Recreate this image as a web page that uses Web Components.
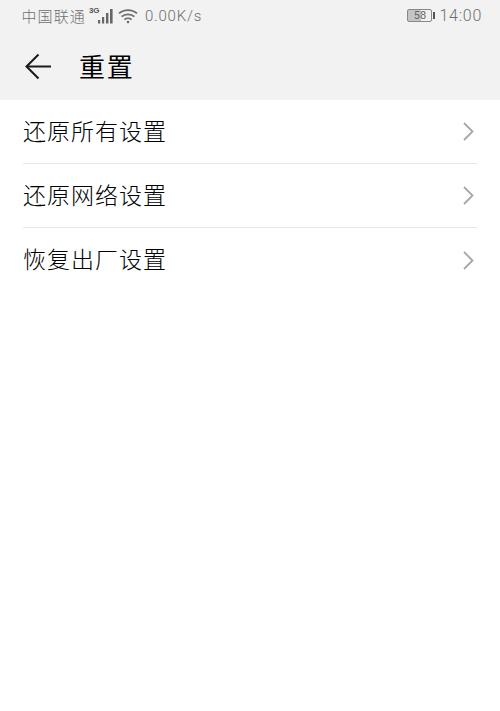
<!DOCTYPE html>
<html lang="zh">
<head>
<meta charset="UTF-8">
<title>重置</title>
<style>
  html, body { margin: 0; height: 100%; background: #fff; }
  body { font-family: "Noto Sans CJK SC", "Liberation Sans", sans-serif; }
</style>
<script>
class StatusBar extends HTMLElement {
  constructor() {
    super();
    this.attachShadow({ mode: 'open' }).innerHTML = `
    <style>
      :host { display: flex; align-items: center; height: 34px; padding: 0 18px 3px 21.5px; color: #6f6f6f; font-size: 15px; box-sizing: border-box; }
      .carrier { letter-spacing: 1.1px; font-family: "Noto Sans CJK SC", sans-serif; font-weight: 300; }
      .net { position: relative; display: block; width: 29px; height: 18px; margin-left: 1px; }
      .net b { position: absolute; left: 2px; top: 0; font: bold 8px/8px "Liberation Sans", sans-serif; color: #555; }
      svg { display: block; }
      .wifi { margin-left: 2px; }
      .speed { margin-left: 7px; font-family: Roboto, sans-serif; font-weight: 300; letter-spacing: .8px; }
      .right { margin-left: auto; display: flex; align-items: center; }
      .batt { position: relative; box-sizing: border-box; width: 25px; height: 13px; border: 1px solid #888; border-radius: 2px; text-align: center; font: 11px/11px Roboto, sans-serif; color: #666; background: linear-gradient(90deg, #c4c4c4 58%, #f1f1f1 58%); }
      .cap { width: 2px; height: 7px; background: #555; margin: 0 4px 0 1px; }
      .time { font: 300 16px Roboto, sans-serif; letter-spacing: .75px; }
    </style>
    <span class="carrier">中国联通</span>
    <span class="net"><b>3G</b>
      <svg width="29" height="18" viewBox="0 0 29 18"><g fill="#666"><rect x="11" y="13" width="2.2" height="3.5"/><rect x="15" y="10" width="2.2" height="6.5"/><rect x="19" y="6" width="2.4" height="10.5"/><rect x="23" y="2" width="2.6" height="14.5"/></g></svg>
    </span>
    <svg class="wifi" width="20" height="16" viewBox="0 0 20 16" fill="none" stroke="#6e6e6e" stroke-width="1.8"><path d="M1 5.4C6 1 14 1 19 5.4"/><path d="M3.6 8.7C7 5.6 13 5.6 16.4 8.7"/><path d="M6.4 11.6C8.4 10 11.6 10 13.6 11.6"/><circle cx="10" cy="14" r="1.3" fill="#6e6e6e" stroke="none"/></svg>
    <span class="speed">0.00K/s</span>
    <span class="right"><span class="batt">58</span><span class="cap"></span><span class="time">14:00</span></span>`;
  }
}
class AppBar extends HTMLElement {
  constructor() {
    super();
    this.attachShadow({ mode: 'open' }).innerHTML = `
    <style>
      :host { display: flex; align-items: center; height: 66px; padding: 0 0 0 25px; box-sizing: border-box; color: #000; }
      svg { display: block; margin-bottom: 1px; }
      .title { margin-left: 27px; margin-bottom: 2px; font-size: 26px; letter-spacing: 1.7px; line-height: 34px; font-weight: 400; }
    </style>
    <svg width="27" height="27" viewBox="0 0 27 27" fill="none" stroke="#1a1a1a" stroke-width="2"><path d="M26 13.5H2"/><path d="M13.5 1.5L1.5 13.5L13.5 25.5"/></svg>
    <span class="title"><slot></slot></span>`;
  }
}
class SettingRow extends HTMLElement {
  constructor() {
    super();
    this.attachShadow({ mode: 'open' }).innerHTML = `
    <style>
      :host { display: flex; align-items: center; justify-content: space-between; height: 64px; margin: 0 23px 0 23px; box-sizing: border-box; border-bottom: 1px solid #e8e8e8; color: #000; }
      :host(:last-child) { border-bottom: 0; }
      .label { margin-bottom: 4px; font-size: 23px; font-weight: 300; letter-spacing: 1px; line-height: 30px; }
      svg { display: block; margin-right: 3px; }
    </style>
    <span class="label"><slot></slot></span>
    <svg width="11" height="19" viewBox="0 0 11 19" fill="none" stroke="#a6a6a6" stroke-width="1.8"><path d="M1 1L9.5 9.5L1 18"/></svg>`;
  }
}
class PageHeader extends HTMLElement {
  constructor() {
    super();
    this.attachShadow({ mode: 'open' }).innerHTML = `
    <style>:host { display: block; background: #f2f2f2; }</style>
    <slot></slot>`;
  }
}
class SettingList extends HTMLElement {
  constructor() {
    super();
    this.attachShadow({ mode: 'open' }).innerHTML = `
    <style>:host { display: block; background: #fff; }</style>
    <slot></slot>`;
  }
}
customElements.define('status-bar', StatusBar);
customElements.define('app-bar', AppBar);
customElements.define('setting-row', SettingRow);
customElements.define('page-header', PageHeader);
customElements.define('setting-list', SettingList);
</script>
</head>
<body>
  <page-header>
    <status-bar></status-bar>
    <app-bar>重置</app-bar>
  </page-header>
  <setting-list>
    <setting-row>还原所有设置</setting-row>
    <setting-row>还原网络设置</setting-row>
    <setting-row>恢复出厂设置</setting-row>
  </setting-list>
</body>
</html>
